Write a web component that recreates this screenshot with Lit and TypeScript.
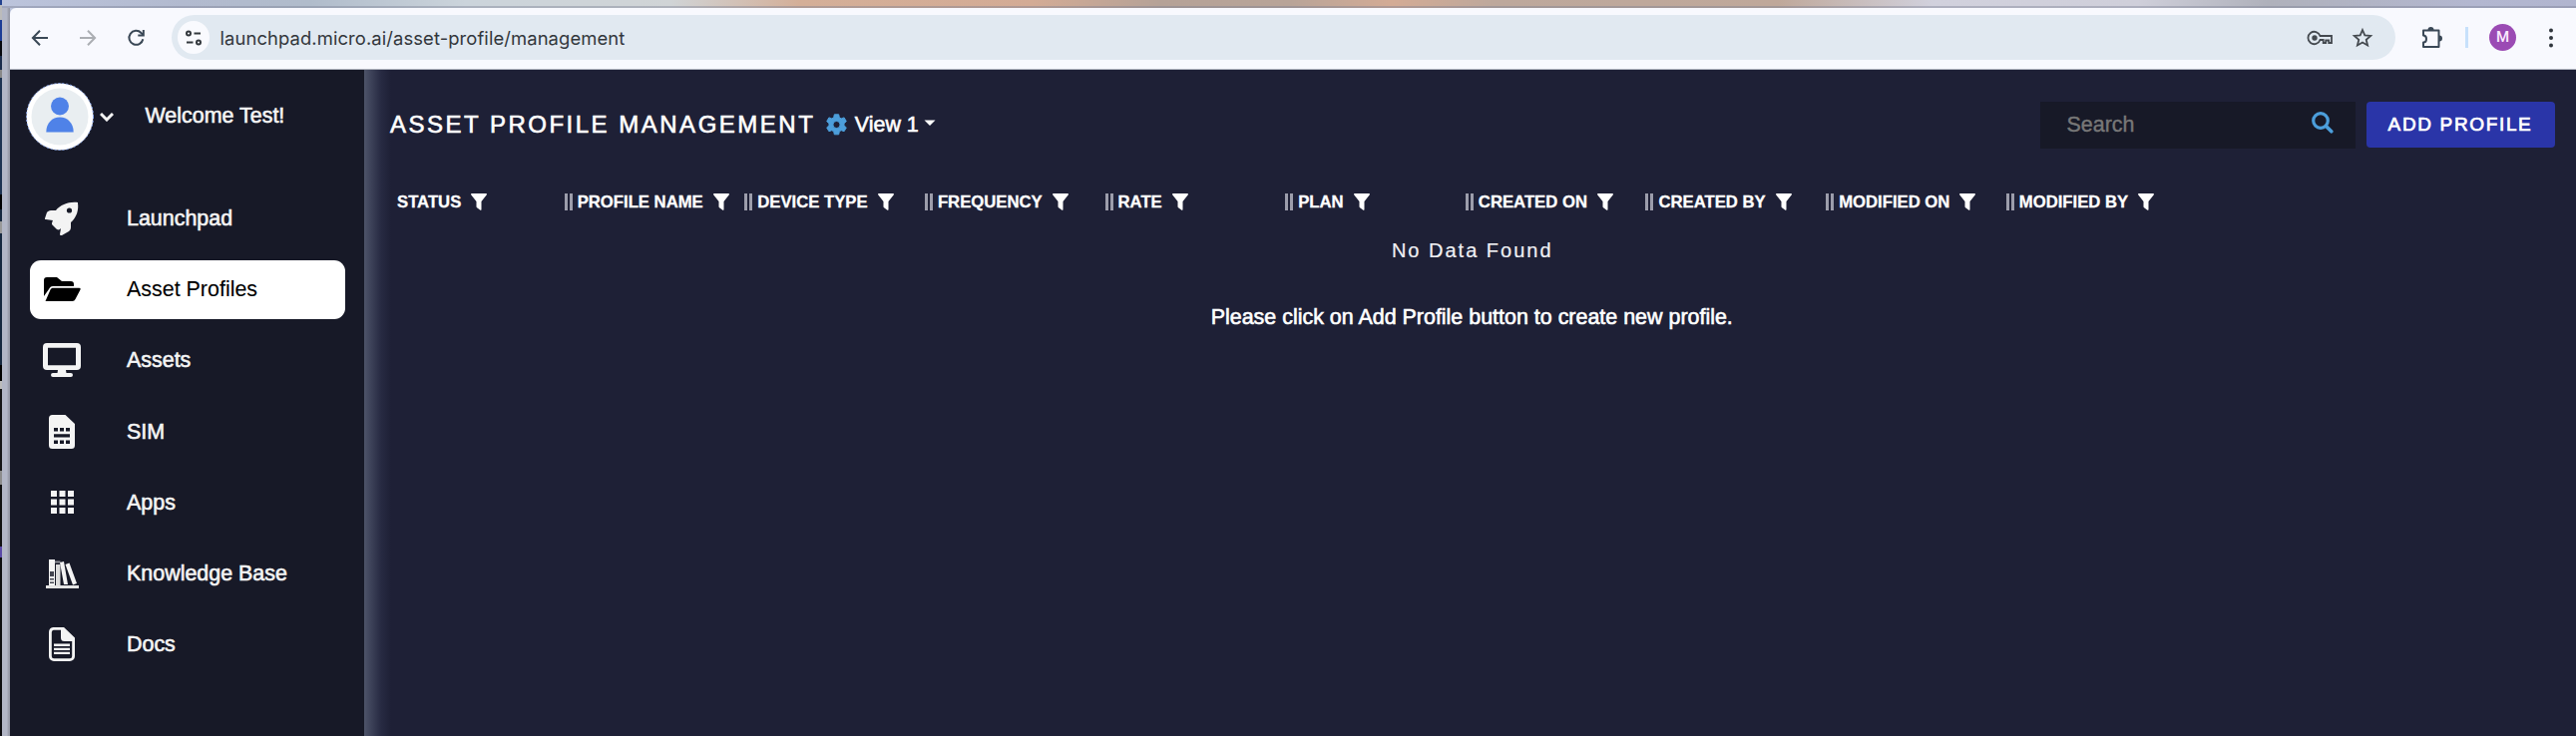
import { LitElement, html, css, svg } from "lit";
import { customElement } from "lit/decorators.js";
import { classMap } from "lit/directives/class-map.js";

const navIcons = {
  rocket: svg`<path d="M33 1c-9-1-17 2-22 8H6c-2 0-3 1-4 2l-2 6c0 1 0 1 1 1l7 1c-1 2-1 3-1 4l5 5c2 1 3 0 4-1l-1 6c0 1 1 1 2 1l7-4c1-1 2-2 2-4v-5c6-5 8-13 7-19z" fill="#f3f3f3"/><circle cx="24.5" cy="9" r="2.600" fill="#171927"/>`,
  folder: svg`<path d="M0 20V4c0-2 1-3 3-3h10l5 4h9c2 0 3 1 3 3v2H9c-2 0-3 1-4 3z" fill="#000"/><path d="M1.500 25 6.500 13.500c.5-1.200 1.500-1.700 3-1.700h26c1 0 1.500.7 1 1.700l-5 9.500c-.6 1.300-1.500 2-3 2z" fill="#000"/>`,
  monitor: svg`<path fill-rule="evenodd" d="M4 0h30a4 4 0 0 1 4 4v19a4 4 0 0 1-4 4H23l.5 3H28a2 2 0 0 1 0 4H10a2 2 0 0 1 0-4h4.500l.5-3H4a4 4 0 0 1-4-4V4a4 4 0 0 1 4-4zm1 4.700v17.600h28V4.700z" fill="#f4f4f4"/>`,
  sim: svg`<path d="M3.500 0h13L26 9v21.500a3.500 3.500 0 0 1-3.500 3.500h-19A3.500 3.500 0 0 1 0 30.500v-27A3.500 3.500 0 0 1 3.500 0z" fill="#f4f4f4"/><path d="M5 13h4v3.500H5zM11 13h4v3.500h-4zM17 13h4v3.500h-4zM5 19.200h16v3.300H5zM5 25.500h4V29H5zM11 25.500h4V29h-4zM17 25.500h4V29h-4z" fill="#171927"/>`,
  grid: svg`<path d="M0 0h6v6H0zM8.500 0h6v6h-6zM17 0h6v6h-6zM0 8.500h6v6H0zM8.500 8.500h6v6h-6zM17 8.500h6v6h-6zM0 17h6v6H0zM8.500 17h6v6h-6zM17 17h6v6h-6z" fill="#f4f4f4"/>`,
  books: svg`<path d="M0 27h33v3H0z" fill="#e4e4e4"/><path d="M3 1h6v26H3z" fill="#f4f4f4"/><path d="M4 13h4v5H4zM4 20h4v1.500H4zM4 23.500h4V25H4z" fill="#171927" opacity=".8"/><path d="M10 6h4.500v21H10z" fill="#dcdcdc"/><path d="M9 2.500h5.500v2H9z" fill="#8d8e96"/><path d="m14 4 4-1 4 23h-4zM19.500 6l4-1.500L31 25l-4 1.500z" fill="#f4f4f4"/>`,
  doc: svg`<path d="M4.500 1.400h10L24.600 11v18a3.600 3.600 0 0 1-3.600 3.600H5A3.600 3.600 0 0 1 1.400 29V5a3.600 3.600 0 0 1 3.100-3.600z" fill="none" stroke="#f4f4f4" stroke-width="2.800"/><path d="M12 2v8.500a3.500 3.500 0 0 0 3.500 3.500H24v-4L16 2zM5 16.500h16V19H5zM5 20.700h16v2.400H5zM5 24.800h16V27H5z" fill="#f4f4f4"/>`,
};

const navItems = [
  { label: "Launchpad", icon: navIcons.rocket, w: 34, h: 34 },
  { label: "Asset Profiles", icon: navIcons.folder, w: 37, h: 26, active: true },
  { label: "Assets", icon: navIcons.monitor, w: 38, h: 34 },
  { label: "SIM", icon: navIcons.sim, w: 26, h: 34 },
  { label: "Apps", icon: navIcons.grid, w: 23, h: 23 },
  { label: "Knowledge Base", icon: navIcons.books, w: 33, h: 30 },
  { label: "Docs", icon: navIcons.doc, w: 26, h: 34 },
];

const columns = ["STATUS", "PROFILE NAME", "DEVICE TYPE", "FREQUENCY", "RATE", "PLAN", "CREATED ON", "CREATED BY", "MODIFIED ON", "MODIFIED BY"];

@customElement("browser-bar")
class BrowserBar extends LitElement {
  static styles = css`
    :host { display: flex; align-items: center; height: 61px; background: #f8f9fe; border-bottom: 1px solid #aeb2bd; border-top-left-radius: 6px; box-sizing: content-box; }
    svg { display: block; flex: none; overflow: visible; }
    .nav { display: flex; gap: 32px; width: 140px; padding-left: 22px; margin-top: -2px; }
    .address { display: flex; align-items: center; width: 2229px; height: 45px; border-radius: 23px; background: #e1e9f1; box-sizing: border-box; padding: 0 23px 0 6px; margin-top: -2px; }
    .site { display: flex; align-items: center; justify-content: center; width: 32px; height: 33px; border-radius: 50%; background: #f9fafe; }
    .url { font: 18.400px Inter, sans-serif; color: #33373c; letter-spacing: 0.1px; margin-left: 10.500px; flex: 1; white-space: nowrap; }
    .star { margin-left: 20px; }
    .tools { display: flex; align-items: center; margin-top: -2px; }
    .puzzle { margin-left: 26px; }
    .sep { width: 3px; height: 21px; margin-left: 23px; background: #c7e1fb; }
    .user { width: 27px; height: 27px; border-radius: 50%; margin-left: 21px; background: #9b4bb4; color: #fbeaff; font: 500 15px/27px Roboto, sans-serif; text-align: center; }
    .dots { margin-left: 33px; }
  `;
  render() {
    return html`
      <div class="nav">
        <svg width="16" height="16" viewBox="0 0 16 16" fill="none" stroke="#3a4856" stroke-width="2"><path d="M16 8H1.500M8 .8.9 8 8 15.200"/></svg>
        <svg width="16" height="16" viewBox="0 0 16 16" fill="none" stroke="#abaeb3" stroke-width="2"><path d="M0 8h14.500M8 .8 15.100 8 8 15.200"/></svg>
        <svg width="17" height="16" viewBox="0 0 17 16" fill="none" stroke="#3a4856" stroke-width="2"><path d="M15.300 9.200A7 7 0 1 1 13.500 3l2 2"/><path d="M15.800 0v5.500h-5.500"/></svg>
      </div>
      <div class="address">
        <div class="site"><svg width="16" height="16" viewBox="0 0 16 16" fill="none" stroke="#33383d" stroke-width="2"><circle cx="3" cy="3.500" r="2"/><path d="M8.500 3.500H15M1 12.500h6.500"/><circle cx="13" cy="12.500" r="2"/></svg></div>
        <div class="url">launchpad.micro.ai/asset-profile/management</div>
        <svg width="25" height="14" viewBox="0 0 25 14" fill="none" stroke="#44494f" stroke-width="1.800"><path d="M12.500 5H24v7h-2.800V9.500h-3V12h-2.500V9h-3.200A6.200 6.200 0 1 1 12.500 5z"/><circle cx="7" cy="7" r="1.800" fill="#44494f"/></svg>
        <svg class="star" width="20" height="19" viewBox="0 0 20 19" fill="none" stroke="#44494f" stroke-width="1.800"><path d="m10 2 2.300 5.400 5.900.5-4.500 3.900 1.400 5.700-5.100-3-5.100 3 1.400-5.700L1.800 7.900l5.900-.5z"/></svg>
      </div>
      <div class="tools">
        <svg class="puzzle" width="21" height="22" viewBox="0 0 21 22"><path d="M2 3.500h15.500V20H2v-4.500c4 0 4-7 0-7z" fill="none" stroke="#3a4856" stroke-width="2" stroke-linejoin="round"/><path d="M6.500 3a3 3 0 0 1 6 0zM18 8.500a3 3 0 0 1 0 6z" fill="#3a4856"/></svg>
        <div class="sep"></div>
        <div class="user">M</div>
        <svg class="dots" width="4" height="20" viewBox="0 0 4 20" fill="#30363d"><circle cx="2" cy="2.500" r="2"/><circle cx="2" cy="10" r="2"/><circle cx="2" cy="17.500" r="2"/></svg>
      </div>`;
  }
}

@customElement("side-bar")
class SideBar extends LitElement {
  static styles = css`
    :host { display: block; width: 355px; box-sizing: border-box; background: #171927; color: #f4f4f4; font: 21.450px "Liberation Sans", Arial, sans-serif; -webkit-text-stroke: 0.6px; }
    svg { display: block; flex: none; }
    .profile { display: flex; align-items: center; padding: 13px 0 0 15.500px; height: 68px; }
    .chev { margin-left: 6px; }
    .welcome { margin-left: 32px; margin-top: -1px; white-space: nowrap; }
    nav { display: flex; flex-direction: column; gap: 12.500px; padding: 39px 19px 0 20px; }
    .item { display: flex; align-items: center; height: 58.600px; border-radius: 11px; }
    .item.active { background: #fff; color: #000; -webkit-text-stroke: 0.1px; }
    .icon { display: flex; justify-content: center; width: 64px; }
    .label { margin-left: 33px; padding-top: 1px; white-space: nowrap; }
  `;
  render() {
    return html`
      <div class="profile">
        <svg width="68" height="68" viewBox="0 0 68 68"><circle cx="34" cy="34" r="33.500" fill="#fff" stroke="#8caaf0" stroke-dasharray="2 2"/><circle cx="34" cy="34" r="28.500" fill="#e9eef1"/><circle cx="34" cy="23.500" r="9" fill="#4f82e8"/><path d="M20.300 49.500c0-9 6-15 13.700-15s13.700 6 13.700 15z" fill="#4f82e8"/></svg>
        <svg class="chev" width="14" height="9" viewBox="0 0 14 9" fill="none" stroke="#f4f4f4" stroke-width="3"><path d="m1 1 6 6 6-6"/></svg>
        <div class="welcome">Welcome Test!</div>
      </div>
      <nav>
        ${navItems.map(
          (n) => html`<div class=${classMap({ item: true, active: !!n.active })}>
            <div class="icon"><svg width=${n.w} height=${n.h} viewBox="0 0 ${n.w} ${n.h}">${n.icon}</svg></div>
            <div class="label">${n.label}</div>
          </div>`
        )}
      </nav>`;
  }
}

@customElement("profile-page")
class ProfilePage extends LitElement {
  static styles = css`
    :host { display: block; flex: 1; box-sizing: border-box; padding: 32px 21.500px 0 20px; color: #fff; font: 21.450px "Liberation Sans", Arial, sans-serif; background: linear-gradient(90deg, #4e5469 0, #3d4259 7px, #272a42 17px, #1e2036 27px, #1e2036 100%); }
    svg { display: block; flex: none; }
    .head { display: flex; align-items: center; height: 46px; }
    .title { margin: 0 0 0 6px; font-size: 24px; font-weight: 400; letter-spacing: 2.500px; -webkit-text-stroke: 0.6px; white-space: nowrap; }
    .gear { margin-left: 10.500px; }
    .view { margin-left: 8px; -webkit-text-stroke: 0.6px; white-space: nowrap; }
    .caret { margin-left: 5px; margin-top: -3px; }
    .search { display: flex; align-items: center; justify-content: space-between; width: 316px; height: 47px; box-sizing: border-box; padding: 0 22px 0 27px; margin-left: auto; background: #171927; color: #777; -webkit-text-stroke: 0.4px; }
    .magnifier { margin-top: -4px; }
    .add { width: 189px; height: 46px; margin-left: 11px; border: 0; padding: 0; border-radius: 4px; background: #2a35a8; color: #fff; font: 19px/42px "Liberation Sans", Arial, sans-serif; letter-spacing: 1.650px; -webkit-text-stroke: 0.7px; }
    .cols { display: grid; grid-template-columns: repeat(10, 180.650px); margin-top: 44px; }
    .col { display: flex; align-items: center; height: 20px; font: bold 16.700px/20px "Liberation Sans", Arial, sans-serif; -webkit-text-stroke: 0.3px; white-space: nowrap; }
    .name { padding-top: 1px; }
    .grip { width: 2px; height: 17px; border: solid #9c9dab; border-width: 0 3px; margin-right: 5px; }
    .col.first { padding-left: 13px; }
    .funnel { margin-left: 10px; }
    .empty { text-align: center; margin-top: 27px; padding-left: 6px; font-size: 20px; line-height: 24px; letter-spacing: 2px; color: #f0f0f4; -webkit-text-stroke: 0.2px; }
    .hint { text-align: center; margin-top: 43px; padding-left: 5px; line-height: 24px; -webkit-text-stroke: 0.6px; }
  `;
  render() {
    return html`
      <div class="head">
        <h1 class="title">ASSET PROFILE MANAGEMENT</h1>
        <svg class="gear" width="21" height="22" viewBox="0 0 21 22"><path fill-rule="evenodd" fill="#4c9edb" stroke="#4c9edb" stroke-width="1" stroke-linejoin="round" d="M8.300 0h4.400l.6 3 1.900 1.100 2.900-1 2.200 3.800-2.300 2v2.200l2.300 2-2.200 3.800-2.900-1-1.900 1.100-.6 3H8.300l-.6-3-1.900-1.100-2.900 1-2.200-3.800 2.300-2V8.900l-2.300-2 2.200-3.800 2.900 1L7.700 3zM10.500 6.600a3.600 3.600 0 1 0 0 7.200 3.600 3.600 0 0 0 0-7.200z" transform="translate(0 .8)"/></svg>
        <div class="view">View 1</div>
        <svg class="caret" width="12" height="7" viewBox="0 0 12 7"><path d="M.5.500h11L6 6z" fill="#fff"/></svg>
        <div class="search">
          <span>Search</span>
          <svg class="magnifier" width="22" height="22" viewBox="0 0 22 22" fill="none" stroke="#4c9edb"><circle cx="9" cy="9" r="7.300" stroke-width="3.200"/><path d="m14.500 14.500 5.300 5.300" stroke-width="3.600" stroke-linecap="round"/></svg>
        </div>
        <button class="add">ADD PROFILE</button>
      </div>
      <div class="cols">
        ${columns.map(
          (c, i) => html`<div class=${classMap({ col: true, first: i === 0 })}>
            ${i ? html`<span class="grip"></span>` : ""}<span class="name">${c}</span>
            <svg class="funnel" width="16" height="17" viewBox="0 0 16 17"><path d="M.8 0h14.400c.8 0 1 .9.500 1.500L10.500 8v8c0 .9-.8 1.100-1.400.6l-3-2.300c-.4-.3-.6-.6-.6-1V8L.300 1.500C-.2.900 0 0 .8 0z" fill="#fff"/></svg>
          </div>`
        )}
      </div>
      <div class="empty">No Data Found</div>
      <div class="hint">Please click on Add Profile button to create new profile.</div>`;
  }
}

@customElement("app-root")
class AppRoot extends LitElement {
  static styles = css`
    :host { display: flex; width: 2582px; height: 738px; overflow: hidden; background: #a7aab8; }
    .edge { width: 2px; background: linear-gradient(180deg, #23428f 0 5px, #bbb 5px 20px, #1c3d96 20px 41px, #05060c 41px 56px, #1b2c4c 56px 70px, #888 70px 78px, #1d3352 78px 195px, #000 195px 210px, #16283f 210px 222px, #999 222px 234px, #16283f 234px 366px, #000 366px 382px, #bbb 382px 390px, #151515 390px 472px, #8c8c8c 472px 486px, #111 486px 548px, #5b4aa8 548px 559px, #0d0d10 559px); }
    .wall { flex: 1; display: flex; flex-direction: column; background: linear-gradient(90deg, #bcc4dc 0, #b2bacf 7%, #b0bccb 12%, #cbd4db 18%, #d0d4d6 26%, #d4af98 31%, #d3ab95 40%, #b5a297 45%, #b8a498 50%, #d3ab95 54%, #bda89c 58%, #bfa89a 69%, #d1d1dd 75%, #cfcfda 83%, #afb1bb 88%, #b3b7d0 96%, #b1b5cf 100%); }
    .window { flex: 1; display: flex; flex-direction: column; margin-top: 6px; border-top: 2px solid rgba(120, 125, 145, 0.4); }
    .row { flex: 1; display: flex; }
    .frame { width: 8px; background: linear-gradient(90deg, #b2b6c6 0 5px, #a0a3b1 6px, #9396a4 8px); }
    .content { flex: 1; display: flex; flex-direction: column; }
    .app { flex: 1; display: flex; }
  `;
  render() {
    return html`
      <div class="edge"></div>
      <div class="wall"><div class="window"><div class="row">
        <div class="frame"></div>
        <div class="content">
          <browser-bar></browser-bar>
          <div class="app"><side-bar></side-bar><profile-page></profile-page></div>
        </div>
      </div></div></div>`;
  }
}
